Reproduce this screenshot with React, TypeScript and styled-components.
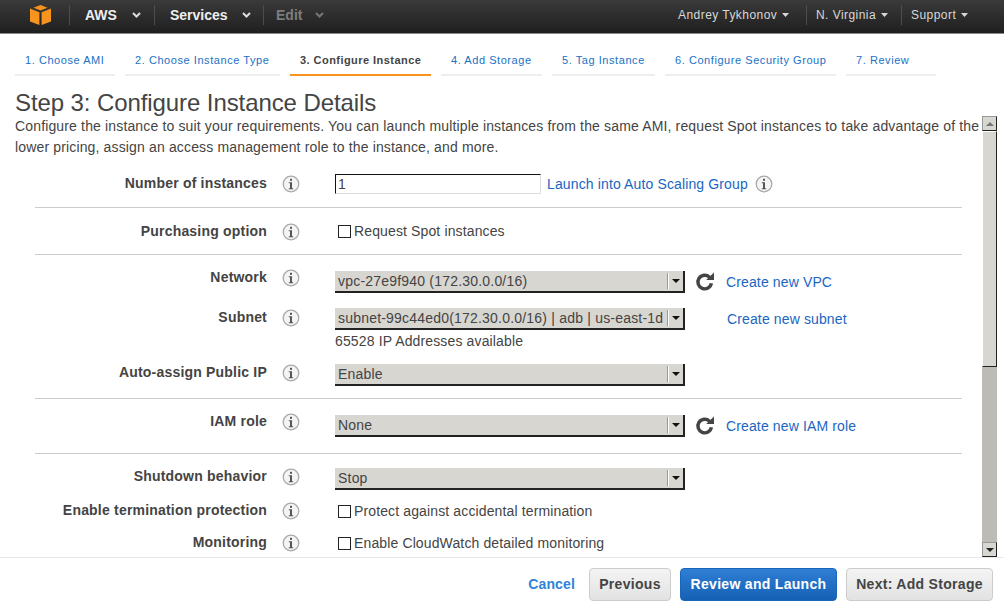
import React from 'react';
import styled, {createGlobalStyle} from 'styled-components';

const GlobalStyle = createGlobalStyle`
  html, body { margin: 0; padding: 0; background: #fff; overflow: hidden; }
  body { font-family: "Liberation Sans", Arial, sans-serif; color: #444; }
`;

const Page = styled.div`
  width: 1004px;
  height: 611px;
  display: flex;
  flex-direction: column;
  overflow: hidden;
`;

// top bar
const NavBar = styled.div`
  height: 34px;
  box-sizing: border-box;
  flex-shrink: 0;
  display: flex;
  align-items: center;
  padding: 0 0 4px 30px;
  background: linear-gradient(#3a3a3a, #1f1f1f);
  border-bottom: 1px solid #888;
`;
const LogoBox = styled.div`
  width: 39px;
  display: flex;
`;
const NavItem = styled.div<{$width: number; $pad: number; $gap: number; $muted?: boolean}>`
  width: ${p => p.$width}px;
  height: 20px;
  box-sizing: border-box;
  border-left: 1px solid #4d4d4d;
  display: flex;
  align-items: center;
  padding-left: ${p => p.$pad}px;
  gap: ${p => p.$gap}px;
  color: ${p => (p.$muted ? '#7d7d7d' : '#eee')};
  font-size: 14px;
  font-weight: bold;
  white-space: nowrap;
`;
const NavSpacer = styled.div`
  flex: 1;
`;
const UserItem = styled.div<{$width: number; $first?: boolean}>`
  width: ${p => p.$width}px;
  height: 20px;
  box-sizing: border-box;
  border-left: ${p => (p.$first ? 'none' : '1px solid #4d4d4d')};
  display: flex;
  align-items: center;
  padding-left: 9px;
  gap: 5px;
  color: #d8d8d8;
  font-size: 12px;
  letter-spacing: 0.45px;
  white-space: nowrap;
`;

// wizard steps
const Steps = styled.div`
  height: 41px;
  flex-shrink: 0;
  margin-top: 1px;
  padding-left: 15px;
  display: flex;
  gap: 10px;
`;
const Step = styled.div<{$width: number; $active?: boolean}>`
  width: ${p => p.$width}px;
  box-sizing: border-box;
  padding: 19px 0 0 10px;
  font-size: 11px;
  letter-spacing: ${p => (p.$active ? 0.45 : 0.56)}px;
  color: ${p => (p.$active ? '#444' : '#1a71c5')};
  font-weight: ${p => (p.$active ? 'bold' : 'normal')};
  border-bottom: 2px solid ${p => (p.$active ? '#f7941e' : '#eee')};
  white-space: nowrap;
`;

const Heading = styled.h1`
  margin: 15px 0 0 15px;
  height: 24px;
  font-size: 24px;
  line-height: 24px;
  font-weight: normal;
  letter-spacing: -0.09px;
  color: #444;
`;

// scrolling part
const Body = styled.div`
  height: 441px;
  margin-top: 1px;
  flex-shrink: 0;
  display: flex;
  padding-left: 15px;
  padding-right: 7px;
  border-bottom: 1px solid #e8e8e8;
`;
const Scroller = styled.div`
  flex: 1;
  overflow: hidden;
`;
const Intro = styled.p`
  margin: 0;
  font-size: 14px;
  line-height: 21px;
  letter-spacing: 0.15px;
  white-space: nowrap;
  color: #444;
`;
const Section = styled.div<{$height: number; $last?: boolean}>`
  height: ${p => p.$height}px;
  margin: 0 20px;
  width: 927px;
  box-sizing: border-box;
  border-bottom: ${p => (p.$last ? 'none' : '1px solid #ccc')};
`;
const Row = styled.div<{$height: number; $top: number}>`
  height: ${p => p.$height}px;
  padding-top: ${p => p.$top}px;
  box-sizing: border-box;
  display: flex;
  align-items: flex-start;
`;
const Label = styled.div`
  width: 232px;
  text-align: right;
  font-size: 14px;
  font-weight: bold;
  line-height: 16px;
  letter-spacing: 0.2px;
  color: #444;
  white-space: nowrap;
`;
const InfoWrap = styled.div`
  width: 68px;
  padding-left: 15px;
  box-sizing: border-box;
  height: 18px;
  display: flex;
`;
const Control = styled.div<{$offset?: number}>`
  display: flex;
  align-items: center;
  height: 20px;
  margin-top: ${p => p.$offset ?? 0}px;
`;
const TextBox = styled.div`
  width: 206px;
  height: 20px;
  box-sizing: border-box;
  border: 1px solid #ddd;
  border-top-color: #111;
  border-left-color: #111;
  font-size: 14px;
  line-height: 19px;
  padding-left: 2px;
  color: #444;
`;
const Link = styled.a<{$left: number}>`
  margin-left: ${p => p.$left}px;
  font-size: 14px;
  letter-spacing: 0.13px;
  color: #1a66c2;
  white-space: nowrap;
`;
const Check = styled.span`
  width: 13px;
  height: 13px;
  box-sizing: border-box;
  border: 1px solid #222;
  background: #fff;
  margin-left: 3px;
  margin-right: 3px;
`;
const CheckText = styled.span`
  font-size: 14px;
  letter-spacing: 0.13px;
  color: #444;
  white-space: nowrap;
`;
const Select = styled.div`
  width: 350px;
  height: 22px;
  box-sizing: border-box;
  background: #d8d6d1;
  border-bottom: 2px solid #222;
  border-right: 2px solid #222;
  display: flex;
  align-items: center;
  font-size: 14px;
  letter-spacing: 0.2px;
  color: #444;
  padding-left: 3px;
`;
const SelectText = styled.span`
  flex: 1;
  white-space: nowrap;
`;
const SelectArrow = styled.span`
  width: 15px;
  height: 16px;
  box-sizing: border-box;
  border-left: 1px solid #fff;
  box-shadow: -1px 0 0 #999;
  display: flex;
  align-items: center;
  justify-content: center;
  &::after {
    content: '';
    border: 4px solid transparent;
    border-top: 4px solid #111;
    border-bottom: 0;
  }
`;
const Hint = styled.div`
  font-size: 14px;
  line-height: 16px;
  letter-spacing: 0.14px;
  color: #444;
  margin-left: 300px;
`;
const IconSlot = styled.span<{$left: number}>`
  display: flex;
  margin-left: ${p => p.$left}px;
`;

// fake scrollbar
const ScrollBar = styled.div`
  width: 15px;
  flex-shrink: 0;
  box-sizing: border-box;
  display: flex;
  flex-direction: column;
  background: #bdbbb6;
`;
const ScrollBtn = styled.div<{$down?: boolean}>`
  height: 15px;
  box-sizing: border-box;
  background: #d8d6d1;
  border: 1px solid #999;
  border-right-color: #222;
  border-bottom-color: #222;
  display: flex;
  align-items: center;
  justify-content: center;
  &::after {
    content: '';
    border: 4px solid transparent;
    ${p => (p.$down ? 'border-top: 4px solid #222; border-bottom: 0;' : 'border-bottom: 4px solid #777; border-top: 0;')}
  }
`;
const ScrollThumb = styled.div`
  height: 236px;
  box-sizing: border-box;
  background: #d8d6d1;
  border: 1px solid #fff;
  border-right-color: #222;
  border-bottom-color: #222;
`;
const ScrollTrack = styled.div`
  flex: 1;
`;

// footer
const Footer = styled.div`
  flex: 1;
  display: flex;
  justify-content: flex-end;
  align-items: flex-start;
  padding: 10px 11px 0 0;
  gap: 9px;
`;
const Cancel = styled.a`
  font-size: 14px;
  font-weight: bold;
  letter-spacing: 0.15px;
  color: #3083d8;
  line-height: 33px;
  margin-right: 5px;
`;
const Button = styled.button<{$primary?: boolean; $width: number}>`
  width: ${p => p.$width}px;
  height: 33px;
  padding: 0 0 2px;
  border-radius: 4px;
  font-family: inherit;
  font-size: 14px;
  font-weight: bold;
  letter-spacing: 0.3px;
  white-space: nowrap;
  color: ${p => (p.$primary ? '#fff' : '#444')};
  border: 1px solid ${p => (p.$primary ? '#1a66b8' : '#ccc')};
  background: ${p => (p.$primary ? 'linear-gradient(#2f7fd4, #1560b5)' : 'linear-gradient(#f4f4f4, #e2e2e2)')};
`;

const Chevron = ({color}: {color: string}) => (
  <svg width={9} height={6} viewBox="0 0 9 6">
    <path d="M1 1l3.5 3.5L8 1" fill="none" stroke={color} strokeWidth="2" />
  </svg>
);

const Caret = () => (
  <svg width={7} height={4} viewBox="0 0 7 4">
    <path d="M0 0h7L3.5 4z" fill="#d8d8d8" />
  </svg>
);

const CubeLogo = () => (
  <svg width={21} height={20} viewBox="0 0 21 20">
    <path d="M10.5 0L17.5 2.8 10.5 5.5 3.5 2.8z" fill="#f7941e" />
    <path d="M0 3.5L9.4 7.2V20L0 16.5z" fill="#f7941e" />
    <path d="M21 3.5L11.6 7.2V20L21 16.5z" fill="#f7941e" />
  </svg>
);

const InfoIcon = () => (
  <svg width={18} height={18} viewBox="0 0 18 18">
    <circle cx="9" cy="9" r="7.8" fill="#f4f4f4" stroke="#aaa" strokeWidth="1.3" />
    <rect x="8" y="3.8" width="2" height="2" fill="#555" />
    <path d="M6.8 7.2H10v6h1.2v1H6.8v-1H8V8.2H6.8z" fill="#555" />
  </svg>
);

const RefreshIcon = () => (
  <svg width={20} height={20} viewBox="0 0 20 20">
    <path d="M16.4 11.2a6.8 6.8 0 1 1-1.9-6" fill="none" stroke="#444" strokeWidth="3.4" />
    <path d="M11.2 8h7.8V.5z" fill="#444" />
  </svg>
);

const steps = [
  {text: '1. Choose AMI', width: 100},
  {text: '2. Choose Instance Type', width: 155},
  {text: '3. Configure Instance', width: 141, active: true},
  {text: '4. Add Storage', width: 101},
  {text: '5. Tag Instance', width: 103},
  {text: '6. Configure Security Group', width: 171},
  {text: '7. Review', width: 90},
];

const App = () => (
  <Page>
    <GlobalStyle />
    <NavBar>
      <LogoBox><CubeLogo /></LogoBox>
      <NavItem $width={85} $pad={15} $gap={15}>AWS <Chevron color="#ddd" /></NavItem>
      <NavItem $width={109} $pad={15} $gap={14}>Services <Chevron color="#ddd" /></NavItem>
      <NavItem $width={100} $pad={12} $gap={13} $muted>Edit <Chevron color="#777" /></NavItem>
      <NavSpacer />
      <UserItem $width={137} $first>Andrey Tykhonov <Caret /></UserItem>
      <UserItem $width={95}>N. Virginia <Caret /></UserItem>
      <UserItem $width={103}>Support <Caret /></UserItem>
    </NavBar>

    <Steps>
      {steps.map(s => (
        <Step key={s.text} $width={s.width} $active={s.active}>{s.text}</Step>
      ))}
    </Steps>

    <Heading>Step 3: Configure Instance Details</Heading>

    <Body>
      <Scroller>
        <Intro>
          Configure the instance to suit your requirements. You can launch multiple instances from the same AMI, request Spot instances to take advantage of the
          <br />
          lower pricing, assign an access management role to the instance, and more.
        </Intro>
        <Section $height={50}>
          <Row $height={49} $top={17}>
            <Label>Number of instances</Label>
            <InfoWrap><InfoIcon /></InfoWrap>
            <Control $offset={-1}>
              <TextBox>1</TextBox>
              <Link $left={6}>Launch into Auto Scaling Group</Link>
              <IconSlot $left={7}><InfoIcon /></IconSlot>
            </Control>
          </Row>
        </Section>
        <Section $height={47}>
          <Row $height={46} $top={15}>
            <Label>Purchasing option</Label>
            <InfoWrap><InfoIcon /></InfoWrap>
            <Control $offset={-2}>
              <Check />
              <CheckText>Request Spot instances</CheckText>
            </Control>
          </Row>
        </Section>
        <Section $height={144}>
          <Row $height={54} $top={14}>
            <Label>Network</Label>
            <InfoWrap><InfoIcon /></InfoWrap>
            <Control $offset={3}>
              <Select><SelectText>vpc-27e9f940 (172.30.0.0/16)</SelectText><SelectArrow /></Select>
              <IconSlot $left={10}><RefreshIcon /></IconSlot>
              <Link $left={11}>Create new VPC</Link>
            </Control>
          </Row>
          <Row $height={24} $top={0}>
            <Label>Subnet</Label>
            <InfoWrap><InfoIcon /></InfoWrap>
            <Control>
              <Select><SelectText>subnet-99c44ed0(172.30.0.0/16) | adb | us-east-1d</SelectText><SelectArrow /></Select>
              <Link $left={42}>Create new subnet</Link>
            </Control>
          </Row>
          <Hint>65528 IP Addresses available</Hint>
          <Row $height={40} $top={15}>
            <Label>Auto-assign Public IP</Label>
            <InfoWrap><InfoIcon /></InfoWrap>
            <Control $offset={1}>
              <Select><SelectText>Enable</SelectText><SelectArrow /></Select>
            </Control>
          </Row>
        </Section>
        <Section $height={55}>
          <Row $height={54} $top={14}>
            <Label>IAM role</Label>
            <InfoWrap><InfoIcon /></InfoWrap>
            <Control $offset={3}>
              <Select><SelectText>None</SelectText><SelectArrow /></Select>
              <IconSlot $left={10}><RefreshIcon /></IconSlot>
              <Link $left={11}>Create new IAM role</Link>
            </Control>
          </Row>
        </Section>
        <Section $height={110} $last>
          <Row $height={46} $top={14}>
            <Label>Shutdown behavior</Label>
            <InfoWrap><InfoIcon /></InfoWrap>
            <Control $offset={1}>
              <Select><SelectText>Stop</SelectText><SelectArrow /></Select>
            </Control>
          </Row>
          <Row $height={32} $top={2}>
            <Label>Enable termination protection</Label>
            <InfoWrap><InfoIcon /></InfoWrap>
            <Control $offset={-1}>
              <Check />
              <CheckText>Protect against accidental termination</CheckText>
            </Control>
          </Row>
          <Row $height={30} $top={2}>
            <Label>Monitoring</Label>
            <InfoWrap><InfoIcon /></InfoWrap>
            <Control $offset={-1}>
              <Check />
              <CheckText>Enable CloudWatch detailed monitoring</CheckText>
            </Control>
          </Row>
        </Section>
      </Scroller>
      <ScrollBar>
        <ScrollBtn />
        <ScrollThumb />
        <ScrollTrack />
        <ScrollBtn $down />
      </ScrollBar>
    </Body>

    <Footer>
      <Cancel>Cancel</Cancel>
      <Button $width={82}>Previous</Button>
      <Button $primary $width={157}>Review and Launch</Button>
      <Button $width={147}>Next: Add Storage</Button>
    </Footer>
  </Page>
);

export default App;
